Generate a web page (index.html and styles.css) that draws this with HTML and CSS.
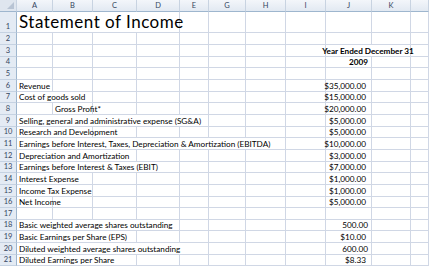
FILE: index.html
```html
<!DOCTYPE html>
<html>
<head>
<meta charset="utf-8">
<link rel="stylesheet" href="styles.css">
</head>
<body>
<div class="sheet">
  <div class="row head">
    <div class="corner"><span class="tri"></span></div>
    <div class="ch">A</div><div class="ch">B</div><div class="ch">C</div><div class="ch">D</div><div class="ch">E</div><div class="ch">G</div><div class="ch">H</div><div class="ch">I</div><div class="ch">J</div><div class="ch">K</div><div class="ch"></div>
  </div>
  <div class="row tall">
    <div class="rh">1</div>
    <div class="c s4 title">Statement of Income</div><div class="c"></div><div class="c"></div><div class="c"></div><div class="c"></div><div class="c"></div><div class="c"></div><div class="c"></div>
  </div>
  <div class="row">
    <div class="rh">2</div>
    <div class="c"></div><div class="c"></div><div class="c"></div><div class="c"></div><div class="c"></div><div class="c"></div><div class="c"></div><div class="c"></div><div class="c"></div><div class="c"></div><div class="c"></div>
  </div>
  <div class="row">
    <div class="rh">3</div>
    <div class="c"></div><div class="c"></div><div class="c"></div><div class="c"></div><div class="c"></div><div class="c"></div><div class="c"></div><div class="c"></div><div class="c s2 b ctr">Year Ended December 31</div><div class="c"></div>
  </div>
  <div class="row">
    <div class="rh">4</div>
    <div class="c"></div><div class="c"></div><div class="c"></div><div class="c"></div><div class="c"></div><div class="c"></div><div class="c"></div><div class="c"></div><div class="c b num">2009</div><div class="c"></div><div class="c"></div>
  </div>
  <div class="row">
    <div class="rh">5</div>
    <div class="c"></div><div class="c"></div><div class="c"></div><div class="c"></div><div class="c"></div><div class="c"></div><div class="c"></div><div class="c"></div><div class="c"></div><div class="c"></div><div class="c"></div>
  </div>
  <div class="row">
    <div class="rh">6</div>
    <div class="c">Revenue</div><div class="c"></div><div class="c"></div><div class="c"></div><div class="c"></div><div class="c"></div><div class="c"></div><div class="c"></div><div class="c num cur">$35,000.00</div><div class="c"></div><div class="c"></div>
  </div>
  <div class="row">
    <div class="rh">7</div>
    <div class="c s2">Cost of goods sold</div><div class="c"></div><div class="c"></div><div class="c"></div><div class="c"></div><div class="c"></div><div class="c"></div><div class="c num cur">$15,000.00</div><div class="c"></div><div class="c"></div>
  </div>
  <div class="row">
    <div class="rh">8</div>
    <div class="c"></div><div class="c">Gross Profit*</div><div class="c"></div><div class="c"></div><div class="c"></div><div class="c"></div><div class="c"></div><div class="c"></div><div class="c num cur">$20,000.00</div><div class="c"></div><div class="c"></div>
  </div>
  <div class="row">
    <div class="rh">9</div>
    <div class="c s5">Selling, general and administrative expense (SG&amp;A)</div><div class="c"></div><div class="c"></div><div class="c"></div><div class="c num cur">$5,000.00</div><div class="c"></div><div class="c"></div>
  </div>
  <div class="row">
    <div class="rh">10</div>
    <div class="c s2">Research and Development</div><div class="c"></div><div class="c"></div><div class="c"></div><div class="c"></div><div class="c"></div><div class="c"></div><div class="c num cur">$5,000.00</div><div class="c"></div><div class="c"></div>
  </div>
  <div class="row">
    <div class="rh">11</div>
    <div class="c s7">Earnings before Interest, Taxes, Depreciation &amp; Amortization (EBITDA)</div><div class="c"></div><div class="c num cur">$10,000.00</div><div class="c"></div><div class="c"></div>
  </div>
  <div class="row">
    <div class="rh">12</div>
    <div class="c s3">Depreciation and Amortization</div><div class="c"></div><div class="c"></div><div class="c"></div><div class="c"></div><div class="c"></div><div class="c num cur">$3,000.00</div><div class="c"></div><div class="c"></div>
  </div>
  <div class="row">
    <div class="rh">13</div>
    <div class="c s4">Earnings before Interest &amp; Taxes (EBIT)</div><div class="c"></div><div class="c"></div><div class="c"></div><div class="c"></div><div class="c num cur">$7,000.00</div><div class="c"></div><div class="c"></div>
  </div>
  <div class="row">
    <div class="rh">14</div>
    <div class="c s2">Interest Expense</div><div class="c"></div><div class="c"></div><div class="c"></div><div class="c"></div><div class="c"></div><div class="c"></div><div class="c num cur">$1,000.00</div><div class="c"></div><div class="c"></div>
  </div>
  <div class="row">
    <div class="rh">15</div>
    <div class="c s2">Income Tax Expense</div><div class="c"></div><div class="c"></div><div class="c"></div><div class="c"></div><div class="c"></div><div class="c"></div><div class="c num cur">$1,000.00</div><div class="c"></div><div class="c"></div>
  </div>
  <div class="row">
    <div class="rh">16</div>
    <div class="c">Net Income</div><div class="c"></div><div class="c"></div><div class="c"></div><div class="c"></div><div class="c"></div><div class="c"></div><div class="c"></div><div class="c num cur">$5,000.00</div><div class="c"></div><div class="c"></div>
  </div>
  <div class="row">
    <div class="rh">17</div>
    <div class="c"></div><div class="c"></div><div class="c"></div><div class="c"></div><div class="c"></div><div class="c"></div><div class="c"></div><div class="c"></div><div class="c"></div><div class="c"></div><div class="c"></div>
  </div>
  <div class="row">
    <div class="rh">18</div>
    <div class="c s4">Basic weighted average shares outstanding</div><div class="c"></div><div class="c"></div><div class="c"></div><div class="c"></div><div class="c num">500.00</div><div class="c"></div><div class="c"></div>
  </div>
  <div class="row">
    <div class="rh">19</div>
    <div class="c s3">Basic Earnings per Share (EPS)</div><div class="c"></div><div class="c"></div><div class="c"></div><div class="c"></div><div class="c"></div><div class="c num cur">$10.00</div><div class="c"></div><div class="c"></div>
  </div>
  <div class="row">
    <div class="rh">20</div>
    <div class="c s5">Diluted weighted average shares outstanding</div><div class="c"></div><div class="c"></div><div class="c"></div><div class="c num">600.00</div><div class="c"></div><div class="c"></div>
  </div>
  <div class="row">
    <div class="rh">21</div>
    <div class="c s3">Diluted Earnings per Share</div><div class="c"></div><div class="c"></div><div class="c"></div><div class="c"></div><div class="c"></div><div class="c num cur">$8.33</div><div class="c"></div><div class="c"></div>
  </div>
</div>
</body>
</html>
```

FILE: styles.css
```css
html, body {
  margin: 0;
  padding: 0;
  background: #ffffff;
}
.sheet {
  width: 429px;
  height: 275px;
  overflow: hidden;
  font-family: Lato, "Liberation Sans", sans-serif;
  font-size: 8.2px;
  color: #000;
}
.row {
  display: grid;
  grid-template-columns: 17px 36px 40px 44px 43px 29px 37px 40px 40px 46px 39px 1fr;
  height: 11.67px;
}
.row.tall {
  height: 21.67px;
}
.c {
  box-sizing: border-box;
  border-right: 1px solid #d0d7e5;
  border-bottom: 1px solid #d0d7e5;
  white-space: nowrap;
  overflow: visible;
  padding: 0 2px;
  display: flex;
  align-items: flex-end;
  line-height: 10px;
}
.s2 { grid-column: span 2; }
.s3 { grid-column: span 3; }
.s4 { grid-column: span 4; }
.s5 { grid-column: span 5; }
.s7 { grid-column: span 7; }
.b { font-weight: bold; }
.ctr { justify-content: center; }
.num { justify-content: flex-end; padding-right: 3px; }
.num.cur { padding-right: 5px; }
.title {
  font-size: 17px;
  letter-spacing: 0.5px;
  line-height: 20px;
}
.head {
  height: 11.67px;
}
.ch, .corner {
  box-sizing: border-box;
  background: linear-gradient(#f3f6fa, #e2e9f2);
  border-right: 1px solid #c8d3e1;
  border-bottom: 1px solid #9eb6ce;
  color: #34465e;
  font-size: 7.5px;
  display: flex;
  align-items: center;
  justify-content: center;
}
.corner {
  position: relative;
  background: #dfe6ef;
}
.tri {
  position: absolute;
  right: 2px;
  bottom: 2px;
  width: 0;
  height: 0;
  border-left: 7px solid transparent;
  border-bottom: 7px solid #b8c4d4;
}
.rh {
  box-sizing: border-box;
  background: #e4ebf4;
  border-right: 1px solid #9eb6ce;
  border-bottom: 1px solid #c5d2e2;
  color: #34465e;
  font-size: 7.5px;
  display: flex;
  align-items: flex-end;
  justify-content: center;
  line-height: 10px;
}
```
